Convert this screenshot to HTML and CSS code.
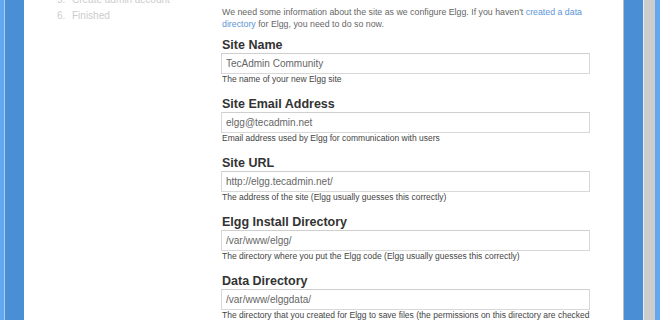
FILE: index.html
```html
<!DOCTYPE html>
<html lang="en">
<head>
  <meta charset="UTF-8">
  <title>Elgg Install - Database installation</title>
  <link rel="stylesheet" href="styles.css">
</head>
<body>
  <div class="edge-left"></div>
  <div class="page">
    <div class="sidebar">
      <ol class="steps">
        <li><span class="num">5.</span>Create admin account</li>
        <li><span class="num">6.</span>Finished</li>
      </ol>
    </div>
    <div class="content">
      <p class="intro">We need some information about the site as we configure Elgg. If you haven't <a href="#">created a data directory</a> for Elgg, you need to do so now.</p>
      <div class="field">
        <label for="sitename">Site Name</label>
        <input type="text" id="sitename" value="TecAdmin Community">
        <div class="help">The name of your new Elgg site</div>
      </div>
      <div class="field">
        <label for="siteemail">Site Email Address</label>
        <input type="text" id="siteemail" value="elgg@tecadmin.net">
        <div class="help">Email address used by Elgg for communication with users</div>
      </div>
      <div class="field">
        <label for="wwwroot">Site URL</label>
        <input type="text" id="wwwroot" value="http://elgg.tecadmin.net/">
        <div class="help">The address of the site (Elgg usually guesses this correctly)</div>
      </div>
      <div class="field">
        <label for="path">Elgg Install Directory</label>
        <input type="text" id="path" value="/var/www/elgg/">
        <div class="help">The directory where you put the Elgg code (Elgg usually guesses this correctly)</div>
      </div>
      <div class="field">
        <label for="dataroot">Data Directory</label>
        <input type="text" id="dataroot" value="/var/www/elggdata/">
        <div class="help">The directory that you created for Elgg to save files (the permissions on this directory are checked when you click Next). It must be an absolute path.</div>
      </div>
    </div>
  </div>
  <div class="edge-right"></div>
</body>
</html>
```
FILE: styles.css
```css
html, body {
  height: 100%;
}
body {
  margin: 0;
  display: flex;
  overflow: hidden;
  font-family: "Liberation Sans", Arial, sans-serif;
  background-color: #fff;
}
.edge-left {
  width: 24px;
  flex-shrink: 0;
  background: linear-gradient(to right, #63a8ee 0, #63a8ee 4px, #a9cdf1 4px, #a9cdf1 5px, #4a8fd6 5px);
}
.edge-right {
  width: 37px;
  flex-shrink: 0;
  background: linear-gradient(to right, #bcbcbc 0, #bcbcbc 1px, #4a8fd6 1px, #4a8fd6 20px, #e4eef8 20px, #e4eef8 21px, #cdcdcd 21px, #cdcdcd 32px, #63a8ee 32px);
}
.page {
  flex: 1;
  display: flex;
  background-color: #fff;
}
.sidebar {
  width: 197px;
  flex-shrink: 0;
}
.steps {
  list-style: none;
  margin: -8px 0 0 0;
  padding: 0 0 0 33px;
  font-size: 10px;
  line-height: 16px;
  color: #cccccc;
}
.steps .num {
  display: inline-block;
  width: 15px;
}
.content {
  width: 369px;
}
.intro {
  margin: 7px 0 8px 1px;
  font-size: 8.8px;
  line-height: 11.5px;
  color: #666;
}
.intro a {
  color: #5b95d6;
  text-decoration: none;
}
.field {
  margin-bottom: 12px;
}
.field label {
  display: block;
  margin: 0 0 1px 1px;
  font-size: 12.5px;
  font-weight: bold;
  line-height: 14px;
  color: #333;
}
.field input {
  display: block;
  width: 100%;
  height: 21px;
  box-sizing: border-box;
  margin: 0;
  padding: 0 4px;
  border: 1px solid #d8d8d8;
  border-top-color: #cfcfcf;
  font-family: "Liberation Sans", Arial, sans-serif;
  font-size: 10px;
  color: #666;
  background-color: #fff;
}
.help {
  margin-left: 1px;
  font-size: 8.5px;
  line-height: 11px;
  color: #444;
}
```
